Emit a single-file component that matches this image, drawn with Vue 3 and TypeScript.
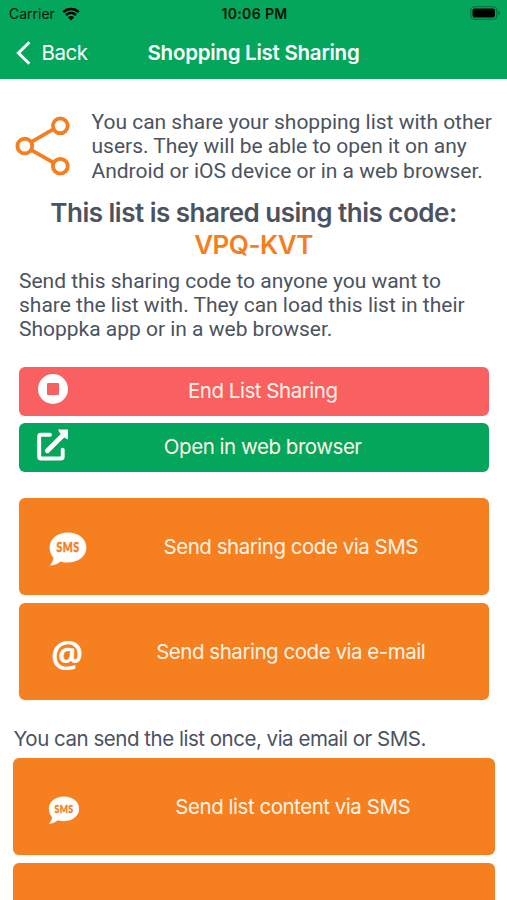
<script setup lang="ts">
interface Action {
  id: string
  label: string
  icon: 'sms' | 'at' | 'none'
}

const codeActions: Action[] = [
  { id: 'code-sms', label: 'Send sharing code via SMS', icon: 'sms' },
  { id: 'code-mail', label: 'Send sharing code via e-mail', icon: 'at' },
]
const contentActions: Action[] = [
  { id: 'content-sms', label: 'Send list content via SMS', icon: 'sms' },
  { id: 'content-more', label: '', icon: 'none' },
]
</script>

<template>
  <div class="screen">
    <header class="top">
      <div class="status">
        <div class="carrier">
          <span>Carrier</span>
          <svg class="wifi" width="18" height="14" viewBox="0 0 18 14">
            <path d="M1.3 5.1C5.7 .9 12.3 .9 16.7 5.1" />
            <path d="M4 8C6.9 5.3 11.1 5.3 14 8" />
            <path class="dot" d="M9 13.4 5.9 10.3C7.7 8.7 10.3 8.7 12.1 10.3Z" />
          </svg>
        </div>
        <span class="clock">10:06 PM</span>
        <svg class="battery" width="31" height="15" viewBox="0 0 31 15">
          <rect x=".8" y=".8" width="26" height="12.4" rx="3.8" fill="none" stroke="#056b36" stroke-width="1.1" />
          <rect x="2.5" y="2.5" width="22.4" height="9" rx="2.2" fill="#000" />
          <path d="M28.3 4.7C30.4 5.5 30.4 8.6 28.3 9.4Z" fill="#056b36" />
        </svg>
      </div>
      <nav class="nav">
        <a class="back">
          <svg width="16" height="26" viewBox="0 0 16 26">
            <path d="M14.4 2.2 3.4 13 14.4 23.8" fill="none" stroke="#fff" stroke-width="3" />
          </svg>
          <span>Back</span>
        </a>
        <h1 class="title">Shopping List Sharing</h1>
      </nav>
    </header>

    <main>
      <section class="intro">
        <svg class="share" width="56" height="60" viewBox="0 0 56 60">
          <path d="M16.5 25.8 38.5 13.2M16.5 34.2 38.5 46.6" />
          <circle cx="9.8" cy="30" r="7.4" />
          <circle cx="45.3" cy="9.8" r="7.4" />
          <circle cx="45.3" cy="50.2" r="7.4" />
        </svg>
        <p class="copy">
          You can share your shopping list with other<br />users. They will be able to open it on any<br />Android or iOS device or in a web browser.
        </p>
      </section>

      <h2 class="heading">This list is shared using this code:</h2>
      <div class="code">VPQ-KVT</div>
      <p class="copy note">
        Send this sharing code to anyone you want to<br />share the list with. They can load this list in their<br />Shoppka app or in a web browser.
      </p>

      <div class="stack controls">
        <button class="btn end">
          <svg class="icon" width="32" height="32" viewBox="0 0 32 32">
            <circle cx="16" cy="16" r="15" fill="#fff" />
            <rect x="10" y="10" width="12" height="12" rx="1" fill="#f96062" />
          </svg>
          <span class="label">End List Sharing</span>
        </button>
        <button class="btn open">
          <svg class="icon" width="32" height="32" viewBox="0 0 32 32">
            <path d="M13 5.8H3.8C2.6 5.8 2.2 6.3 2.2 7.4V28C2.2 29.1 2.6 29.5 3.8 29.5H24.1C25.3 29.5 25.7 29.1 25.7 28V20.6" fill="none" stroke="#fff" stroke-width="3.9" stroke-linecap="round" />
            <path d="M10.4 21.8 26.2 6" fill="none" stroke="#fff" stroke-width="4.8" stroke-linecap="round" />
            <path d="M21 .4H31V10.6Q28.6 10 25.3 6.7T21 .4Z" fill="#fff" />
          </svg>
          <span class="label">Open in web browser</span>
        </button>
      </div>

      <div class="stack sharing">
        <button v-for="action in codeActions" :key="action.id" class="btn tall">
          <svg v-if="action.icon === 'sms'" class="icon" width="38" height="34" viewBox="0 0 38 34">
            <path d="M19 .6C29.5.6 37.4 7 37.4 15.6S29.5 30.6 19 30.6C16.2 30.6 13.8 30.2 11.6 29.4 8.4 31.8 4.8 33.5.7 33.6 2.8 31.4 4.2 29 4.5 25.7 2 23 .6 19.5.6 15.6.6 7 8.5.6 19 .6Z" fill="#fff" />
            <text class="sms" x="7.5" y="20.3" textLength="23" lengthAdjust="spacingAndGlyphs">SMS</text>
          </svg>
          <span v-else class="icon at">@</span>
          <span class="label">{{ action.label }}</span>
        </button>
      </div>

      <p class="once">You can send the list once, via email or SMS.</p>
      <div class="stack content">
        <button v-for="action in contentActions" :key="action.id" class="btn tall">
          <svg v-if="action.icon === 'sms'" class="icon" width="32" height="28" viewBox="0 0 38 34">
            <path d="M19 .6C29.5.6 37.4 7 37.4 15.6S29.5 30.6 19 30.6C16.2 30.6 13.8 30.2 11.6 29.4 8.4 31.8 4.8 33.5.7 33.6 2.8 31.4 4.2 29 4.5 25.7 2 23 .6 19.5.6 15.6.6 7 8.5.6 19 .6Z" fill="#fff" />
            <text class="sms" x="7.5" y="20.3" textLength="23" lengthAdjust="spacingAndGlyphs">SMS</text>
          </svg>
          <span v-if="action.label" class="label">{{ action.label }}</span>
        </button>
      </div>
    </main>
  </div>
</template>

<style>
body {
  margin: 0;
  background: #fff;
}
</style>

<style scoped>
.screen {
  width: 507px;
  height: 900px;
  overflow: hidden;
  background: #fff;
  color: #4b535e;
  font-family: Inter, 'Liberation Sans', sans-serif;
}
.top {
  height: 79px;
  background: #03a65a;
}
.status {
  display: grid;
  grid-template-columns: 1fr auto 1fr;
  align-items: center;
  height: 27px;
  padding: 0 6px 0 8px;
  color: #03150b;
  font-size: 14px;
}
.carrier {
  display: flex;
  align-items: center;
  gap: 7px;
  padding-left: 1px;
}
.wifi {
  fill: none;
  stroke: #000;
  stroke-width: 2.4;
}
.wifi .dot {
  fill: #000;
  stroke: none;
}
.clock {
  font-weight: 600;
  letter-spacing: 0.35px;
}
.battery {
  justify-self: end;
}
.nav {
  display: grid;
  grid-template-columns: 1fr auto 1fr;
  align-items: center;
  height: 51px;
  color: #fff;
}
.back {
  display: flex;
  align-items: center;
  gap: 10.5px;
  padding-left: 15px;
  font-size: 20.5px;
  letter-spacing: -0.5px;
}
.title {
  margin: 0;
  font-size: 20.5px;
  font-weight: 600;
  letter-spacing: -0.25px;
}
.intro {
  display: flex;
  gap: 20.5px;
  padding: 31px 0 0 15px;
}
.share {
  flex: none;
  margin-top: 6px;
  fill: none;
  stroke: #f57e20;
  stroke-width: 3.8;
}
.copy {
  margin: 0;
  font-family: Roboto, sans-serif;
  font-size: 21px;
  line-height: 24.3px;
  letter-spacing: -0.01px;
  white-space: nowrap;
}
.heading,
.code {
  margin: 0;
  font-size: 26px;
  font-weight: 600;
  line-height: 32px;
  letter-spacing: -0.5px;
  text-align: center;
  white-space: nowrap;
}
.heading {
  margin-top: 14px;
}
.code {
  color: #f57e20;
}
.note {
  padding: 8px 0 0 19px;
}
.stack {
  display: flex;
  flex-direction: column;
  gap: 7px;
  padding: 0 18.5px 0 19px;
}
.controls {
  margin-top: 25px;
}
.sharing {
  gap: 7.5px;
  margin-top: 26px;
}
.content {
  gap: 7.5px;
  padding: 0 12.5px 0 13px;
}
.btn {
  display: grid;
  grid-template-columns: 50px 1fr;
  align-items: center;
  height: 49px;
  padding: 0 32px 1px 0;
  border: 0;
  border-radius: 6px;
  color: #fff3e6;
  font-family: inherit;
  font-size: 20.5px;
  letter-spacing: -0.47px;
  white-space: nowrap;
}
.btn .icon {
  justify-self: start;
  margin: 0 0 4px 18px;
}
.label {
  text-align: center;
}
.end {
  background: #f96062;
}
.open {
  background: #03a65a;
}
.tall {
  grid-template-columns: 74px 1fr;
  height: 97.5px;
  padding: 0 0 1px;
  background: #f67f20;
}
.tall .icon {
  margin: 6px 0 0 30px;
}
.content .btn {
  grid-template-columns: 78px 1fr;
}
.content .icon {
  margin: 7px 0 0 35px;
}
.sms {
  fill: #f67f20;
  stroke: #f67f20;
  stroke-width: 0.5;
  font-family: Lato, sans-serif;
  font-size: 13.5px;
  font-weight: 900;
  letter-spacing: 0.6px;
}
.tall .at {
  margin: 5px 0 0 32px;
  color: #fff;
  font-family: 'Open Sans', sans-serif;
  font-size: 36px;
  font-weight: 700;
  line-height: 34px;
}
.once {
  margin: 26px 0 6.5px;
  padding-left: 13.5px;
  font-size: 20.5px;
  line-height: 25px;
  letter-spacing: -0.48px;
  white-space: nowrap;
}
</style>
